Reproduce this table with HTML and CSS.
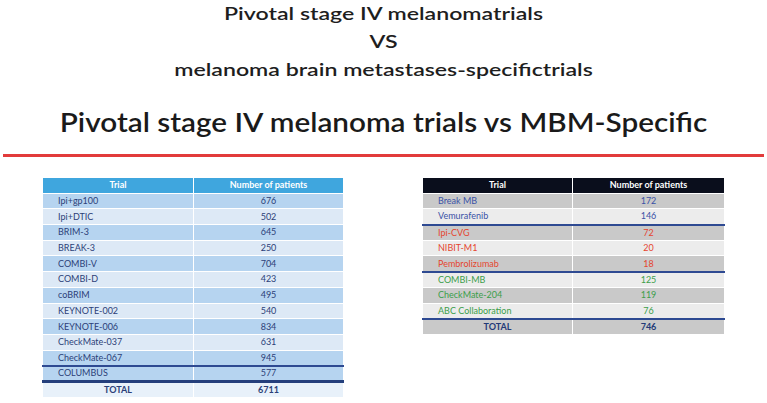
FILE: index.html
```html
<!DOCTYPE html>
<html>
<head>
<meta charset="utf-8">
<link rel="stylesheet" href="styles.css">
</head>
<body>
<div class="page">
  <div class="titles">
    <p class="title-line">Pivotal stage IV melanomatrials</p>
    <p class="title-line">VS</p>
    <p class="title-line">melanoma brain metastases-specifictrials</p>
  </div>
  <h1 class="heading">Pivotal stage IV melanoma trials vs MBM-Specific</h1>
  <div class="rule"></div>
  <div class="tables">
    <table class="trials blue">
      <colgroup><col class="c1"><col class="c2"></colgroup>
      <tr class="head"><th>Trial</th><th>Number of patients</th></tr>
      <tr class="dark"><td class="name">Ipi+gp100</td><td class="num">676</td></tr>
      <tr class="light"><td class="name">Ipi+DTIC</td><td class="num">502</td></tr>
      <tr class="dark"><td class="name">BRIM-3</td><td class="num">645</td></tr>
      <tr class="light"><td class="name">BREAK-3</td><td class="num">250</td></tr>
      <tr class="dark"><td class="name">COMBI-V</td><td class="num">704</td></tr>
      <tr class="light"><td class="name">COMBI-D</td><td class="num">423</td></tr>
      <tr class="dark"><td class="name">coBRIM</td><td class="num">495</td></tr>
      <tr class="light"><td class="name">KEYNOTE-002</td><td class="num">540</td></tr>
      <tr class="dark"><td class="name">KEYNOTE-006</td><td class="num">834</td></tr>
      <tr class="light"><td class="name">CheckMate-037</td><td class="num">631</td></tr>
      <tr class="dark"><td class="name">CheckMate-067</td><td class="num">945</td></tr>
      <tr class="dark sep"><td class="name">COLUMBUS</td><td class="num">577</td></tr>
      <tr class="total sep-thick"><td class="tot">TOTAL</td><td class="num tot">6711</td></tr>
    </table>
    <table class="trials grey">
      <colgroup><col class="r1"><col class="r2"></colgroup>
      <tr class="head"><th>Trial</th><th>Number of patients</th></tr>
      <tr class="dark c-blue"><td class="name">Break MB</td><td class="num">172</td></tr>
      <tr class="light c-blue"><td class="name">Vemurafenib</td><td class="num">146</td></tr>
      <tr class="dark c-red sep"><td class="name">Ipi-CVG</td><td class="num">72</td></tr>
      <tr class="light c-red"><td class="name">NIBIT-M1</td><td class="num">20</td></tr>
      <tr class="dark c-red"><td class="name">Pembrolizumab</td><td class="num">18</td></tr>
      <tr class="light c-green sep"><td class="name">COMBI-MB</td><td class="num">125</td></tr>
      <tr class="dark c-green"><td class="name">CheckMate-204</td><td class="num">119</td></tr>
      <tr class="light c-green"><td class="name">ABC Collaboration</td><td class="num">76</td></tr>
      <tr class="dark total sep"><td class="tot">TOTAL</td><td class="num tot">746</td></tr>
    </table>
  </div>
</div>
</body>
</html>
```
FILE: styles.css
```css
html, body {
  margin: 0;
  padding: 0;
  background: #ffffff;
}

.page {
  width: 767px;
  height: 403px;
  overflow: hidden;
  font-family: Lato, "Open Sans", sans-serif;
}

.titles {
  padding-top: 0;
}

.title-line {
  margin: 0;
  text-align: center;
  font-size: 17px;
  line-height: 28px;
  font-weight: 600;
  color: #1e1e1e;
  transform: scaleX(1.36);
}

.heading {
  margin: 20px 0 0 0;
  text-align: center;
  font-size: 27px;
  line-height: 36px;
  font-weight: 600;
  color: #1a1a1a;
  transform: scaleX(1.1);
}

.rule {
  margin: 14px 3px 0 3px;
  height: 3px;
  background: #e23b3b;
}

.tables {
  display: flex;
  justify-content: space-between;
  align-items: flex-start;
  padding: 0 42px;
  margin-top: 20px;
}

.trials {
  border-collapse: collapse;
  table-layout: fixed;
  font-size: 9px;
}

.trials.blue { width: 301px; }
.trials.grey { width: 302px; }

.c1 { width: 151px; }
.c2 { width: 150px; }
.r1 { width: 150px; }
.r2 { width: 152px; }

.trials tr { height: 15.7px; }

.trials th,
.trials td {
  border: 1px solid #ffffff;
  padding: 0;
  line-height: 10px;
}

.trials th {
  color: #ffffff;
  font-weight: 700;
  text-align: center;
}

.trials .name {
  text-align: left;
  padding-left: 15px;
}

.trials .num {
  text-align: center;
}

.trials .tot {
  text-align: center;
  font-weight: 700;
}

/* blue table */
.blue .head th { background: #3fa6de; }
.blue .dark td { background: #b6d4f0; }
.blue .light td { background: #dde9f6; }
.blue .total td { background: #e8f1fa; }
.blue td { color: #2c3f78; }

/* grey table */
.grey .head th { background: #0a0e1c; }
.grey .dark td { background: #c9c9c9; }
.grey .light td { background: #ececec; }
.grey .c-blue td { color: #3a52a6; }
.grey .c-red td { color: #e5452f; }
.grey .c-green td { color: #3b9e49; }
.grey .total td { color: #233a78; }

.trials .sep td { border-top: 2px solid #2e4a92; }
.trials .sep-thick td { border-top: 3px solid #243f7c; }
```
